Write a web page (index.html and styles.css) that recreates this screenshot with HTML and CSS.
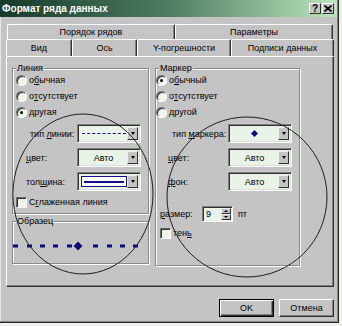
FILE: index.html
```html
<!DOCTYPE html>
<html lang="ru">
<head>
  <meta charset="UTF-8">
  <meta name="viewport" content="width=device-width, initial-scale=1.0">
  <title>Формат ряда данных</title>
  <link rel="stylesheet" href="styles.css">
</head>
<body>
  <div class="dialog">
    <div class="titlebar">
      <span class="title">Формат ряда данных</span>
      <div class="caption-btns">
        <span class="cap-btn">?</span>
        <span class="cap-btn">
          <svg width="8" height="7" viewBox="0 0 8 7"><path d="M0.5 0.5 L7.5 6.5 M7.5 0.5 L0.5 6.5" stroke="#000" stroke-width="1.6"/></svg>
        </span>
      </div>
    </div>

    <div class="tabs">
      <div class="tab-row back">
        <div class="tab t-order">Порядок рядов</div>
        <div class="tab t-params">Параметры</div>
      </div>
      <div class="tab-row front">
        <div class="tab t-view">Вид</div>
        <div class="tab t-axis">Ось</div>
        <div class="tab t-err">Y-погрешности</div>
        <div class="tab t-labels">Подписи данных</div>
      </div>
    </div>

    <div class="panel">
      <div class="col col-left">
        <div class="group g-line">
          <span class="group-title">Линия</span>
          <div class="radio-row"><span class="radio"></span>о<u>б</u>ычная</div>
          <div class="radio-row"><span class="radio"></span>о<u>т</u>сутствует</div>
          <div class="radio-row"><span class="radio on"></span>другая</div>

          <div class="field first">
            <span class="lbl">тип <u>л</u>инии:</span>
            <div class="combo"><div class="combo-val"><span class="dash"></span></div><span class="combo-btn"></span></div>
          </div>
          <div class="field">
            <span class="lbl"><u>ц</u>вет:</span>
            <div class="combo"><div class="combo-val">Авто</div><span class="combo-btn"></span></div>
          </div>
          <div class="field">
            <span class="lbl">тол<u>щ</u>ина:</span>
            <div class="combo"><div class="combo-val"><span class="weight"><span></span></span></div><span class="combo-btn"></span></div>
          </div>

          <div class="check-row smooth"><span class="check"></span>С<u>г</u>лаженная линия</div>
        </div>

        <div class="group g-sample">
          <span class="group-title">Образец</span>
          <svg class="sample" width="134" height="10" viewBox="0 0 134 10">
            <g fill="#0b0b7a">
              <rect x="0" y="3.5" width="5" height="3"/>
              <rect x="14" y="3.5" width="5" height="3"/>
              <rect x="27" y="3.5" width="5" height="3"/>
              <rect x="40" y="3.5" width="5" height="3"/>
              <rect x="54" y="3.5" width="5" height="3"/>
              <path d="M65 0.5 L69.5 5 L65 9.5 L60.5 5 Z"/>
              <rect x="80" y="3.5" width="5" height="3"/>
              <rect x="94" y="3.5" width="5" height="3"/>
              <rect x="107" y="3.5" width="5" height="3"/>
              <rect x="120" y="3.5" width="5" height="3"/>
            </g>
          </svg>
        </div>
      </div>

      <div class="col col-right">
        <div class="group g-marker">
          <span class="group-title">Маркер</span>
          <div class="radio-row"><span class="radio on"></span>о<u>б</u>ычный</div>
          <div class="radio-row"><span class="radio"></span>о<u>т</u>сутствует</div>
          <div class="radio-row"><span class="radio"></span>другой</div>

          <div class="field first">
            <span class="lbl">тип <u>м</u>аркера:</span>
            <div class="combo"><div class="combo-val"><span class="diamond"></span></div><span class="combo-btn"></span></div>
          </div>
          <div class="field">
            <span class="lbl"><u>ц</u>вет:</span>
            <div class="combo"><div class="combo-val">Авто</div><span class="combo-btn"></span></div>
          </div>
          <div class="field">
            <span class="lbl"><u>ф</u>он:</span>
            <div class="combo"><div class="combo-val">Авто</div><span class="combo-btn"></span></div>
          </div>

          <div class="size-row">
            <span class="size-lbl"><u>р</u>азмер:</span>
            <div class="spin"><span class="spin-val">9</span><span class="spin-btns"><span class="up"></span><span class="down"></span></span></div>
            <span class="unit">пт</span>
          </div>

          <div class="check-row shadow"><span class="check"></span>тен<u>ь</u></div>
        </div>
      </div>
    </div>

    <div class="buttons">
      <button class="btn default">OK</button>
      <button class="btn">Отмена</button>
    </div>
  </div>

  <!-- пометки карандашом поверх диалога -->
  <svg class="notes" width="342" height="326" viewBox="0 0 342 326">
    <ellipse cx="83" cy="194" rx="70" ry="80" fill="none" stroke="#1e1e1e" stroke-width="1"/>
    <ellipse cx="247" cy="197" rx="80" ry="80" fill="none" stroke="#1e1e1e" stroke-width="1"/>
  </svg>
</body>
</html>
```

FILE: styles.css
```css
* {
  box-sizing: border-box;
}

body {
  margin: 0;
  width: 342px;
  height: 326px;
  overflow: hidden;
  position: relative;
  background: #eef0ea;
  font-family: "Liberation Sans", Arial, sans-serif;
  font-size: 9px;
  color: #000;
}

u {
  text-decoration: underline;
  text-underline-offset: 1px;
}

.dialog {
  width: 339px;
  height: 323px;
  display: flex;
  flex-direction: column;
  background: #c4c4c4;
  border-right: 1px solid #2a2a2a;
  border-bottom: 1px solid #2a2a2a;
  box-shadow: inset -1px -1px 0 #808080, inset 1px 1px 0 #e6e6e6;
}

/* заголовок окна */
.titlebar {
  height: 17px;
  margin-right: 1px;
  padding: 0 3px 0 2px;
  display: flex;
  align-items: center;
  justify-content: space-between;
  background: linear-gradient(to right, #173a2a, #4d7d62 50%, #bce6bc);
}

.title {
  color: #fff;
  font-weight: bold;
  font-size: 10px;
}

.caption-btns {
  display: flex;
  gap: 1px;
}

.cap-btn {
  width: 12px;
  height: 11px;
  display: flex;
  align-items: center;
  justify-content: center;
  background: #c4c4c4;
  border: 1px solid;
  border-color: #fff #303030 #303030 #fff;
  font-weight: bold;
  font-size: 10px;
  line-height: 1;
}

/* вкладки */
.tabs {
  height: 39px;
  padding-top: 7px;
}

.tab-row {
  display: flex;
}

.tab-row.back {
  height: 15px;
  margin-left: 7px;
}

.tab-row.front {
  height: 17px;
  margin-left: 6px;
}

.tab {
  display: flex;
  align-items: center;
  justify-content: center;
  border-top: 1px solid #fff;
  border-left: 1px solid #fff;
  border-right: 1px solid #303030;
  border-radius: 2px 2px 0 0;
  box-shadow: inset -1px 0 0 #808080;
}

.t-order { width: 168px; }
.t-params { width: 158px; }
.t-view { width: 66px; }
.t-axis { width: 65px; }
.t-err { width: 94px; }
.t-labels { width: 103px; }

/* страница вкладки */
.panel {
  width: 328px;
  height: 231px;
  margin-left: 6px;
  padding: 11px 0 0 5px;
  display: flex;
  gap: 6px;
  border-top: 1px solid #fff;
  border-left: 1px solid #fff;
  border-right: 1px solid #303030;
  border-bottom: 1px solid #303030;
  box-shadow: inset -1px -1px 0 #808080;
}

.col-left { width: 137px; }
.col-right { width: 145px; }

.group {
  position: relative;
  border: 1px solid #8a8a8a;
  box-shadow: inset 1px 1px 0 #fff, 1px 1px 0 #fff;
}

.group-title {
  position: absolute;
  top: -7px;
  left: 3px;
  padding: 0 1px;
  line-height: 12px;
  background: #c4c4c4;
}

.g-line {
  height: 146px;
  padding: 3px 0 0 3px;
}

.g-sample {
  height: 43px;
  margin-top: 7px;
  padding: 19px 0 0 0;
}

.sample {
  display: block;
}

.g-marker {
  height: 198px;
  padding: 3px 0 0 0;
}

/* переключатели и флажки */
.radio-row {
  height: 16px;
  display: flex;
  align-items: center;
}

.radio {
  width: 11px;
  height: 11px;
  margin-right: 2px;
  border-radius: 50%;
  border: 1px solid;
  border-color: #6a6a6a #fff #fff #6a6a6a;
  background: #eef6ec;
  box-shadow: inset 1px 1px 0 #303030;
  display: flex;
  align-items: center;
  justify-content: center;
}

.radio.on::after {
  content: "";
  width: 3px;
  height: 3px;
  border-radius: 50%;
  background: #000;
}

.check-row {
  display: flex;
  align-items: center;
  height: 14px;
  margin-top: 4px;
}

.check {
  width: 11px;
  height: 11px;
  margin-right: 2px;
  border: 1px solid;
  border-color: #6a6a6a #fff #fff #6a6a6a;
  box-shadow: inset 1px 1px 0 #303030;
  background: #eef6ec;
}

.smooth { padding-left: 0; }
.shadow { padding-left: 4px; }

/* поля со списком */
.field {
  height: 19px;
  margin-top: 5px;
  display: flex;
  align-items: center;
}

.field.first { margin-top: 4px; }
.field.first .lbl { padding-left: 4px; }

.g-line .field { padding-left: 10px; }
.g-line .lbl { width: 51px; }

.g-marker .field { padding-left: 12px; }
.g-marker .lbl { width: 60px; }

.combo {
  width: 64px;
  height: 19px;
  display: flex;
  padding: 2px;
  border: 1px solid;
  border-color: #808080 #fff #fff #808080;
  box-shadow: inset 1px 1px 0 #303030, inset -1px -1px 0 #dcdcdc;
  background: #e9f3e7;
}

.combo-val {
  flex: 1;
  display: flex;
  align-items: center;
  justify-content: center;
}

.combo-btn {
  width: 11px;
  display: flex;
  align-items: center;
  justify-content: center;
  background: #c4c4c4;
  border: 1px solid;
  border-color: #eee #303030 #303030 #eee;
}

.combo-btn::after {
  content: "";
  border-left: 2px solid transparent;
  border-right: 2px solid transparent;
  border-top: 3px solid #000;
}

.dash {
  width: 44px;
  border-top: 1px dashed #10108a;
}

.weight {
  width: 46px;
  height: 11px;
  display: flex;
  align-items: center;
  padding: 0 2px;
  border: 1px solid #10108a;
  background: #fff;
}

.weight span {
  flex: 1;
  height: 2px;
  background: #10108a;
}

.diamond {
  width: 5px;
  height: 5px;
  background: #0b0b7a;
  transform: rotate(45deg);
}

/* размер */
.size-row {
  height: 16px;
  margin-top: 15px;
  padding-left: 4px;
  display: flex;
  align-items: center;
}

.size-lbl { width: 42px; }

.spin {
  width: 31px;
  height: 16px;
  display: flex;
  border: 1px solid;
  border-color: #808080 #fff #fff #808080;
  box-shadow: inset 1px 1px 0 #303030;
  background: #e9f3e7;
}

.spin-val {
  flex: 1;
  padding: 2px 0 0 3px;
}

.spin-btns {
  width: 10px;
  display: flex;
  flex-direction: column;
  margin: 1px 1px 1px 0;
}

.spin-btns span {
  flex: 1;
  display: flex;
  align-items: center;
  justify-content: center;
  background: #c4c4c4;
  border: 1px solid;
  border-color: #eee #303030 #303030 #eee;
}

.spin-btns .up::after {
  content: "";
  border-left: 2px solid transparent;
  border-right: 2px solid transparent;
  border-bottom: 2px solid #000;
}

.spin-btns .down::after {
  content: "";
  border-left: 2px solid transparent;
  border-right: 2px solid transparent;
  border-top: 2px solid #000;
}

.unit {
  margin-left: 5px;
}

/* кнопки диалога */
.buttons {
  display: flex;
  justify-content: flex-end;
  gap: 5px;
  padding: 12px 4px 0 0;
}

.btn {
  width: 55px;
  height: 18px;
  padding: 0;
  font-family: inherit;
  font-size: 9px;
  color: #000;
  background: #c4c4c4;
  border: 1px solid;
  border-color: #fff #303030 #303030 #fff;
  box-shadow: inset -1px -1px 0 #808080;
}

.btn.default {
  border: 1px solid #000;
  box-shadow: inset 1px 1px 0 #fff, inset -1px -1px 0 #303030, inset -2px -2px 0 #808080;
}

.notes {
  position: absolute;
  left: 0;
  top: 0;
  pointer-events: none;
}
```
